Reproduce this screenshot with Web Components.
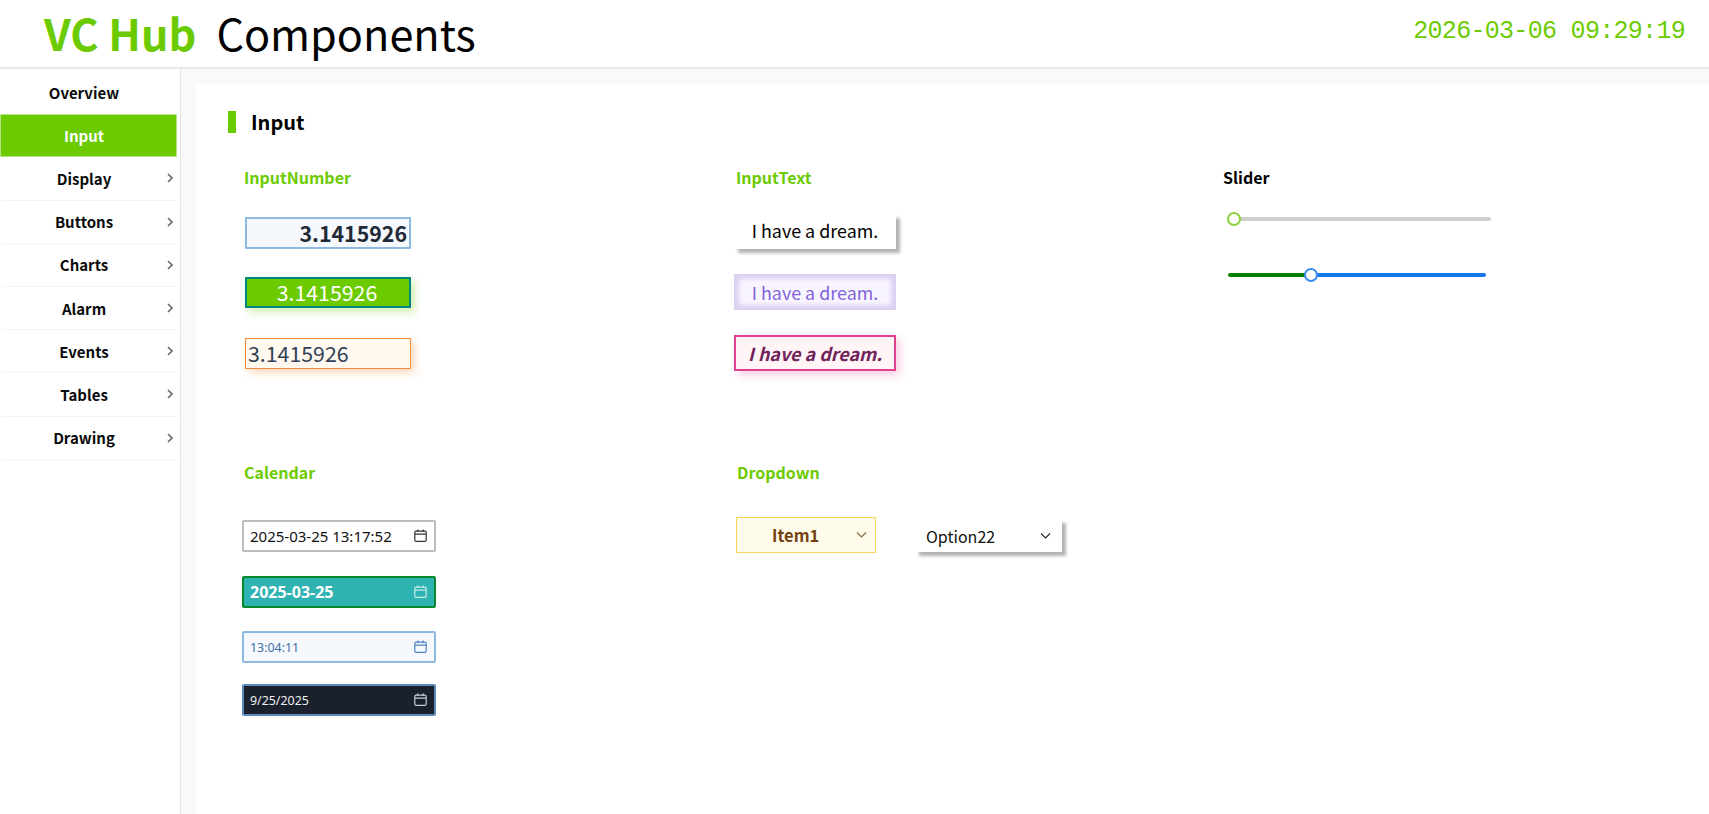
<!DOCTYPE html>
<html lang="en"><head><meta charset="utf-8"><title>VC Hub Components</title>
<style>
html,body{margin:0;height:100%;background:#fff}
body{font-family:"Noto Sans CJK SC","Noto Sans",sans-serif;color:#000;overflow:hidden}
vc-app{height:814px}
</style></head><body>
<template id="t-app"><style>
:host{display:flex;flex-direction:column;height:814px;width:1709px}
.main{display:flex;flex:1;min-height:0}
</style><slot name="header"></slot><div class="main"><slot name="nav"></slot><slot></slot></div></template>

<template id="t-header"><style>
:host{display:flex;align-items:center;justify-content:space-between;box-sizing:border-box;height:69px;border-bottom:2px solid #e8e8e8;padding:0 24px 0 44px;background:#fff}
.t{font-size:43.2px;line-height:66px;display:flex;gap:20px;margin-top:-3px}
b{color:#6ccb00;font-weight:700}
.clock{font-family:"Liberation Mono",monospace;font-size:25px;letter-spacing:-.7px;color:#6ccb00;font-weight:400;margin-top:-4px}
</style><div class="t"><b>VC Hub</b><span>Components</span></div><div class="clock">2026-03-06 09:29:19</div></template>

<template id="t-nav"><style>
:host{display:block;box-sizing:border-box;width:181px;flex:none;border-right:1px solid #e4e4e4;padding-top:2px;background:#fff}
</style><slot></slot></template>

<template id="t-item"><style>
:host{display:flex;align-items:center;justify-content:center;position:relative;box-sizing:border-box;height:43.2px;margin:0 3px 0 2px;border-bottom:1px solid #f5f5f5;font-size:15px;font-weight:700;color:#0b0b0b;padding-right:11px}
:host([plain]){border-bottom-color:transparent}
:host([active]){background:#6ccb00;color:#fff;border:1px solid #b5e48a;margin:0 3px 0 0;padding-right:9px}
svg{position:absolute;right:2px;top:50%;margin-top:-6px;width:10px;height:12px;fill:none;stroke:#666;stroke-width:1.6}
</style><slot></slot><svg viewBox="0 0 10 12"><path d="M3 2l4 4-4 4"/></svg></template>

<template id="t-panelwrap"><style>
:host{display:block;flex:1;background:#f9f9f9;padding:15px 0 0 15px;min-width:0}
.p{background:#fff;height:100%;box-sizing:border-box;padding:27px 0 0 32px}
.h{display:flex;align-items:center;gap:15px;font-size:20px;font-weight:700;line-height:22px}
.h i{width:8px;height:22px;background:#6ccb00;display:block}
.g{display:grid;grid-template-columns:491px 488px 1fr;grid-template-rows:295px auto;padding:32px 0 0 16px}
</style><div class="p"><div class="h"><i></i><span>Input</span></div><div class="g"><slot></slot></div></div></template>

<template id="t-sec"><style>
:host{display:block}
h3{margin:0 0 var(--gap,28px);font-size:16px;line-height:24px;font-weight:700;color:var(--c,#6ccb00);padding-left:var(--lp,0)}
.row{display:flex;flex-direction:var(--dir,column)}
</style><h3><slot name="label"></slot></h3><div class="row"><slot></slot></div></template>

<template id="t-box"><style>
:host{display:flex;align-items:center;box-sizing:border-box;white-space:nowrap}
</style><slot></slot></template>

<template id="t-slider"><style>
:host{display:block;position:relative;height:4px;border-radius:2px}
i{position:absolute;top:-5px;width:14px;height:14px;box-sizing:border-box;border-radius:50%;background:#fff;border:2px solid var(--b)}
</style><i></i></template>

<template id="t-date"><style>
:host{display:flex;align-items:center;justify-content:space-between;box-sizing:border-box;width:194px;height:32px;border-radius:2px;padding:0 7px 0 6px;font-family:"Noto Sans",sans-serif;white-space:nowrap}
svg{width:13px;height:13px;fill:none;stroke:currentColor;stroke-width:1.2;flex:none;color:var(--ic);margin:-2px 0 0 0}
</style><span><slot></slot></span><svg viewBox="0 0 13 13"><rect x=".8" y="2.1" width="11.4" height="10.2" rx="1.4"/><path d="M.8 5.2h11.4M3.8.5v2.4M9.2.5v2.4"/></svg></template>

<template id="t-drop"><style>
:host{display:flex;align-items:center;box-sizing:border-box;position:relative;white-space:nowrap}
svg{position:absolute;right:var(--r,10px);top:50%;margin-top:-4px;width:11px;height:8px;fill:none;stroke:var(--ic,#333);stroke-width:1.1}
</style><slot></slot><svg viewBox="0 0 11 8"><path d="M1 1.5l4.5 4.5L10 1.5"/></svg></template>

<vc-app>
<vc-header slot="header"></vc-header>
<vc-nav slot="nav">
<vc-item plain nochev>Overview</vc-item>
<vc-item active nochev>Input</vc-item>
<vc-item>Display</vc-item><vc-item>Buttons</vc-item><vc-item>Charts</vc-item><vc-item>Alarm</vc-item><vc-item>Events</vc-item><vc-item>Tables</vc-item><vc-item>Drawing</vc-item>
</vc-nav>
<vc-panel>
<vc-sec><span slot="label">InputNumber</span>
<vc-box style="width:166px;height:32px;margin-left:1px;border:2px solid #8fb8e2;background:#f5f9fd;color:#1f2937;font-weight:700;font-size:21.33px;justify-content:flex-end;padding:0 2px 1px 0">3.1415926</vc-box>
<vc-box style="width:166px;height:31px;margin:28px 0 0 1px;border:2px solid #00857f;background:#6ccb00;color:#fff;font-size:21.33px;justify-content:center;padding:0 2px 3px 0;box-shadow:4px 4px 8px rgba(108,203,0,.3)">3.1415926</vc-box>
<vc-box style="width:166px;height:31px;margin:30px 0 0 1px;border:1px solid #f68c38;background:#fff9f0;color:#334155;font-size:21.33px;padding:0 0 2px 2px;box-shadow:4px 4px 8px rgba(246,140,56,.3)">3.1415926</vc-box>
</vc-sec>
<vc-sec style="--gap:25px;--lp:1px"><span slot="label">InputText</span>
<vc-box style="width:162px;height:35px;margin-left:-1px;background:#fff;font-size:17.9px;justify-content:center;padding-bottom:3px;box-shadow:4px 4px 3px rgba(0,0,0,.3)">I have a dream.</vc-box>
<vc-box style="width:162px;height:36px;margin:25px 0 0 -1px;background:#f9f5ff;color:#8163dc;font-size:17.9px;justify-content:center;padding-bottom:1px;box-shadow:inset 0 0 4px 5px #dcd0f2">I have a dream.</vc-box>
<vc-box style="width:162px;height:36px;margin:25px 0 0 -1px;border:2px solid #e2418f;background:#fff5f7;color:#702459;font-size:17.9px;font-weight:700;font-style:italic;justify-content:center;padding-bottom:1px;box-shadow:4px 4px 8px rgba(226,65,143,.25)">I have a dream.</vc-box>
</vc-sec>
<vc-sec style="--c:#000;--gap:28px;--lp:0"><span slot="label">Slider</span>
<vc-slider style="width:261px;margin-left:7px;background:#cfcfcf;--b:#8ed13d;--t:-3px"></vc-slider>
<vc-slider style="width:258px;margin:52px 0 0 5px;background:linear-gradient(90deg,#008000 0 82px,#1677ee 82px);--b:#3b8cf0;--t:76px"></vc-slider>
</vc-sec>
<vc-sec style="--gap:36px"><span slot="label">Calendar</span>
<vc-date style="margin-left:-2px;background:#fff;border:2px solid #bcbcbc;color:#111;font-size:15px;--ic:#333">2025-03-25 13:17:52</vc-date>
<vc-date style="margin:24px 0 0 -2px;background:#2fb2b2;border:2px solid #078a2c;color:#fff;font-size:16px;font-weight:700;--ic:#c5ece9">2025-03-25</vc-date>
<vc-date style="margin:23px 0 0 -2px;background:#f5f9fd;border:2px solid #8fb8e2;color:#3d6ea8;font-size:12.4px;--ic:#4f83c0">13:04:11</vc-date>
<vc-date style="margin:21px 0 0 -2px;background:#1a202c;border:2px solid #5a8ac0;color:#f0f0f0;font-size:12.4px;--ic:#c9ccd1">9/25/2025</vc-date>
</vc-sec>
<vc-sec style="--gap:33px;--dir:row;--lp:2px"><span slot="label">Dropdown</span>
<vc-drop style="width:140px;height:36px;margin-left:1px;border:1px solid #f6d65c;background:#fffbeb;color:#744210;font-size:16.5px;font-weight:700;padding-left:35px;--ic:#8a6a3a;--r:8px">Item1</vc-drop>
<vc-drop style="width:147px;height:33px;margin:2px 0 0 39px;background:#fff;color:#111;font-size:16px;padding-left:11px;box-shadow:4px 4px 3px rgba(0,0,0,.3);--ic:#222;--r:11px">Option22</vc-drop>
</vc-sec>
</vc-panel>
</vc-app>
<script>
function def(tag,tid,init){customElements.define(tag,class extends HTMLElement{
 constructor(){super();this.attachShadow({mode:'open'}).appendChild(document.getElementById(tid).content.cloneNode(true));}
 connectedCallback(){if(init)init(this);}
});}
def('vc-app','t-app');def('vc-header','t-header');def('vc-nav','t-nav');
def('vc-item','t-item',e=>{if(e.hasAttribute('nochev'))e.shadowRoot.querySelector('svg').remove();});
def('vc-panel','t-panelwrap');def('vc-sec','t-sec');def('vc-box','t-box');
def('vc-slider','t-slider',e=>{e.shadowRoot.querySelector('i').style.left=getComputedStyle(e).getPropertyValue('--t');});
def('vc-date','t-date');def('vc-drop','t-drop');
</script>
</body></html>
